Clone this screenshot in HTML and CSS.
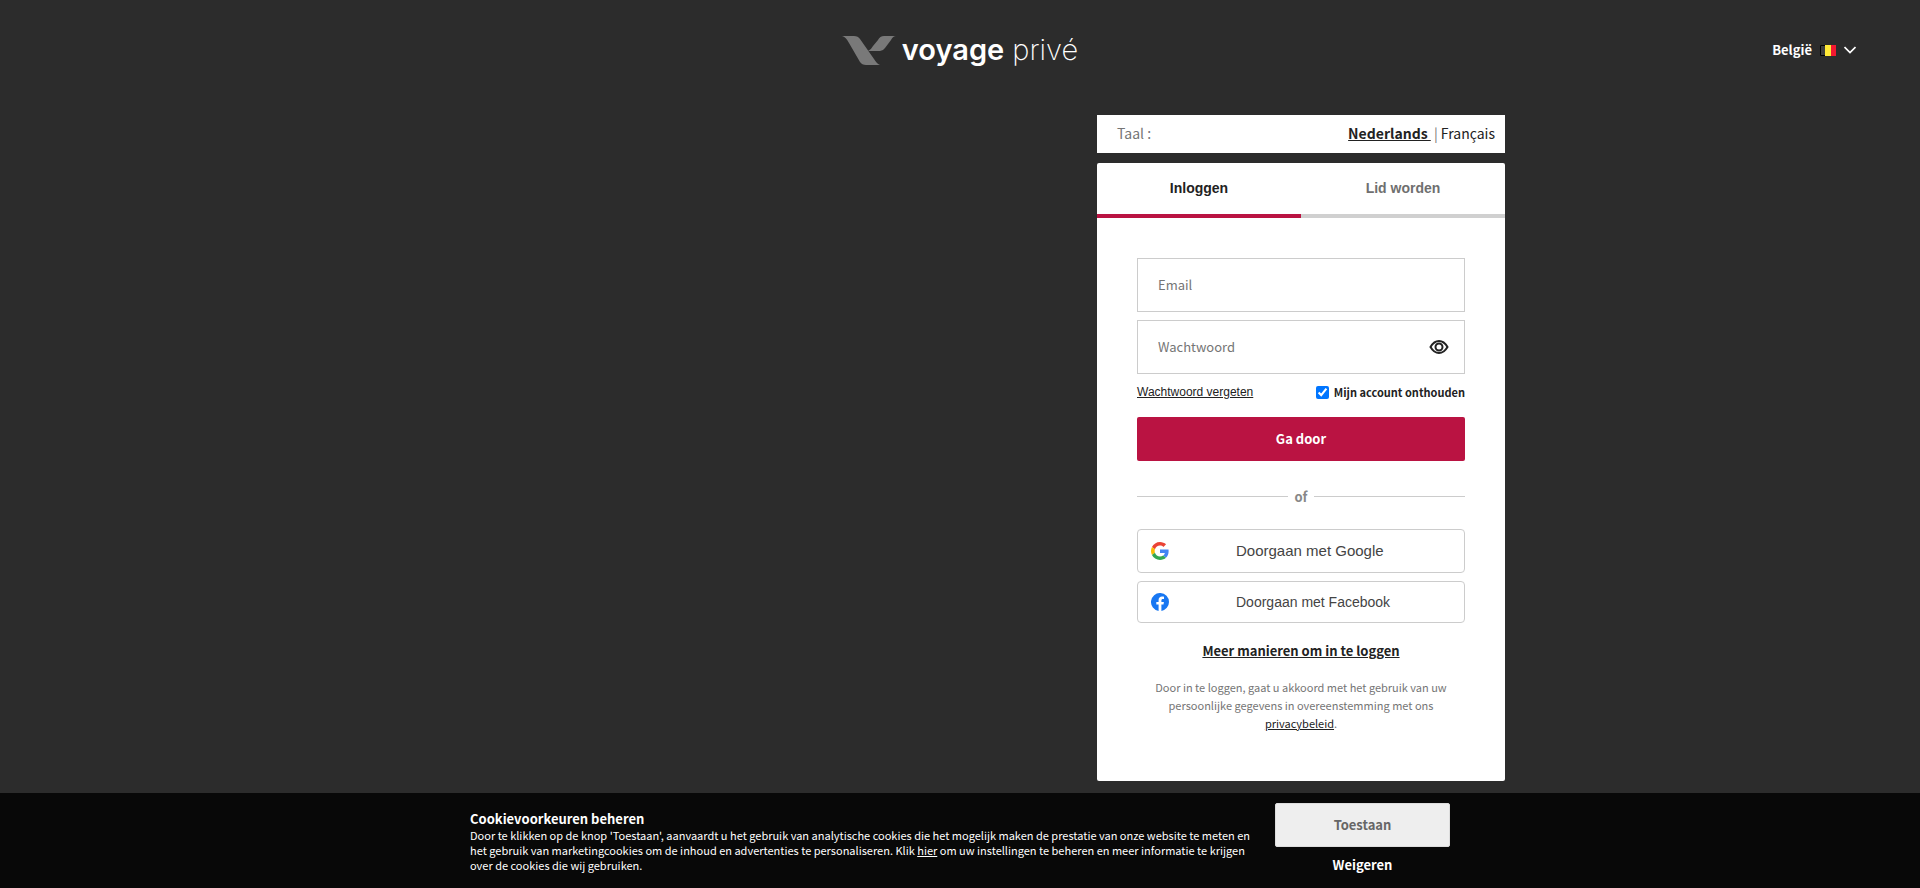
FILE: index.html
```html
<!DOCTYPE html>
<html lang="nl-BE">
	<head>
		<meta charset="utf-8">
		<meta name="viewport" content="width=device-width, initial-scale=1">
		<title>Voyage Privé</title>
		<link rel="stylesheet" href="styles.css">
	</head>
	<body>
		<header class="header">
			<a class="logo" href="#">
				<svg class="logo-mark" viewBox="0 0 54 29" aria-hidden="true">
					<path fill="#797979" d="M0 0h12q4 0 6 3l14 20q3 5 6 6H24q-4 0-6-3L7 7Q4 1 0 0z"/>
					<path fill="#797979" d="M54 0H42q-4 0-6 4l-5 6q-2 4-5 5h12q3 0 5-3l6-8q2-4 5-4z"/>
				</svg>
				<span class="logo-text"><b>voyage</b> <span>privé</span></span>
			</a>
			<button class="country" type="button">
				België
				<svg class="flag" viewBox="0 0 16 11" aria-hidden="true">
					<path fill="#3c3c3c" d="M0 0h5v11h-5z"/>
					<path fill="#ffe936" d="M5 0h6v11h-6z"/>
					<path fill="#f31830" d="M11 0h5v11h-5z"/>
					<path fill="none" stroke="#000" d="M5 .5h-4.500v10h4.500"/>
				</svg>
				<svg class="chevron" viewBox="0 0 12 8" aria-hidden="true">
					<path fill="none" stroke="#fff" stroke-width="1.700" d="M.5 1l5.500 5.500 5.500-5.500"/>
				</svg>
			</button>
		</header>

		<main class="main">
			<div class="panel">
				<nav class="lang">
					<span class="lang-label">Taal :</span>
					<span class="lang-list"><a class="lang-active" href="#">Nederlands&nbsp;</a> | <a href="#">Français</a></span>
				</nav>

				<section class="card">
					<div class="tabs" role="tablist">
						<button class="tab tab-active" type="button" role="tab" aria-selected="true">Inloggen</button>
						<button class="tab" type="button" role="tab" aria-selected="false">Lid worden</button>
					</div>

					<form class="form">
						<input class="field" type="email" placeholder="Email" aria-label="Email">
						<div class="password">
							<input class="field" type="password" placeholder="Wachtwoord" aria-label="Wachtwoord">
							<button class="eye" type="button" aria-label="Wachtwoord tonen">
								<svg viewBox="0 0 20 14" aria-hidden="true">
									<path d="M1.500 7q3.500-6 8.500-6t8.500 6q-3.500 6-8.500 6t-8.500-6z"/>
									<circle cx="10" cy="7" r="3.500"/>
								</svg>
							</button>
						</div>

						<div class="options">
							<a class="forgot" href="#">Wachtwoord vergeten</a>
							<span class="remember">
								<input type="checkbox" id="remember" checked>
								<label for="remember">Mijn account onthouden</label>
							</span>
						</div>

						<button class="submit" type="submit">Ga door</button>
						<div class="divider">of</div>

						<button class="social google" type="button">
							<svg viewBox="0 0 48 48" aria-hidden="true">
								<path fill="#ea4335" d="M24 9.500c3.540 0 6.710 1.220 9.210 3.600l6.850-6.850C35.900 2.380 30.470 0 24 0 14.620 0 6.510 5.380 2.560 13.220l7.980 6.190C12.430 13.720 17.740 9.500 24 9.500z"/>
								<path fill="#4285f4" d="M46.980 24.550c0-1.570-.15-3.090-.38-4.550H24v9.020h12.940c-.58 2.960-2.260 5.480-4.780 7.180l7.730 6c4.510-4.180 7.090-10.360 7.090-17.650z"/>
								<path fill="#fbbc05" d="M10.530 28.590c-.48-1.450-.76-2.990-.76-4.590s.27-3.140.76-4.590l-7.980-6.190C.92 16.460 0 20.120 0 24c0 3.880.92 7.540 2.560 10.780l7.970-6.190z"/>
								<path fill="#34a853" d="M24 48c6.480 0 11.930-2.130 15.890-5.810l-7.730-6c-2.150 1.450-4.920 2.300-8.160 2.300-6.260 0-11.570-4.220-13.470-9.910l-7.980 6.190C6.510 42.620 14.620 48 24 48z"/>
							</svg>
							Doorgaan met Google
						</button>
						<button class="social facebook" type="button">
							<svg viewBox="0 0 24 24" aria-hidden="true">
								<path fill="#1877f2" d="M24 12a12 12 0 1 0-13.880 11.850v-8.380H7.080V12h3.040V9.360c0-3 1.800-4.670 4.540-4.670 1.320 0 2.690.24 2.690.24v2.950h-1.520c-1.490 0-1.950.93-1.950 1.870V12h3.320l-.53 3.470h-2.790v8.380A12 12 0 0 0 24 12z"/>
							</svg>
							Doorgaan met Facebook
						</button>

						<a class="more" href="#">Meer manieren om in te loggen</a>
						<p class="legal">Door in te loggen, gaat u akkoord met het gebruik van uw persoonlijke gegevens in overeenstemming met ons <a href="#">privacybeleid</a>.</p>
					</form>
				</section>
			</div>
		</main>

		<footer class="cookies">
			<div class="cookies-inner">
				<div class="cookies-text">
					<h2>Cookievoorkeuren beheren</h2>
					<p>Door te klikken op de knop 'Toestaan', aanvaardt u het gebruik van analytische cookies die het mogelijk maken de prestatie van onze website te meten en het gebruik van marketingcookies om de inhoud en advertenties te personaliseren. Klik <a href="#">hier</a> om uw instellingen te beheren en meer informatie te krijgen over de cookies die wij gebruiken.</p>
				</div>
				<div class="cookies-actions">
					<button class="allow" type="button">Toestaan</button>
					<button class="refuse" type="button">Weigeren</button>
				</div>
			</div>
		</footer>
	</body>
</html>
```
FILE: styles.css
```css
* {
	box-sizing: border-box;
}

body {
	display: flex;
	flex-direction: column;
	min-height: 100vh;
	margin: 0;
	background: #2c2c2c;
	color: #222;
	font-family: "Noto Sans CJK SC", sans-serif;
	font-size: 13px;
	line-height: 18px;
}

a {
	color: inherit;
}

button {
	padding: 0;
	border: 0;
	background: none;
	color: inherit;
	font: inherit;
	cursor: pointer;
}

svg {
	display: block;
}

/* header */

.header {
	display: grid;
	grid-template-columns: 1fr auto 1fr;
	align-items: center;
	height: 100px;
	padding: 0 64px;
	color: #fff;
}

.logo {
	display: flex;
	grid-column: 2;
	align-items: center;
	gap: 6px;
	text-decoration: none;
}

.logo-mark {
	width: 54px;
	height: 29px;
}

.logo-text {
	font-family: Inter, sans-serif;
	font-size: 29px;
	font-weight: 200;
	line-height: 36px;
}

.logo-text b {
	font-weight: 600;
}

.country {
	display: flex;
	align-items: center;
	justify-self: end;
	gap: 8px;
	font-weight: 700;
}

.flag {
	width: 16px;
	height: 11px;
}

.chevron {
	width: 12px;
	height: 8px;
}

/* login panel */

.main {
	display: flex;
	flex: 1;
	justify-content: flex-end;
	width: 100%;
	max-width: 1170px;
	margin: 0 auto;
	padding: 15px 40px 12px;
}

.panel {
	width: 408px;
}

.lang {
	display: flex;
	align-items: center;
	justify-content: space-between;
	height: 38px;
	margin-bottom: 10px;
	padding: 0 10px 2px 20px;
	background: #fff;
	font-size: 14px;
}

.lang-label,
.lang-list {
	color: #757575;
}

.lang a {
	color: #222;
	text-decoration: none;
}

.lang .lang-active {
	font-weight: 700;
	text-decoration: underline;
}

.card {
	overflow: hidden;
	border-radius: 2px;
	background: #fff;
}

.tabs {
	display: flex;
}

.tab {
	flex: 1;
	height: 55px;
	padding-bottom: 1px;
	border-bottom: 4px solid #d0d0d0;
	color: #6f6f6f;
	font-family: "Liberation Sans", Arial, sans-serif;
	font-size: 14px;
	font-weight: 700;
}

.tab-active {
	border-color: #ba1342;
	color: #222;
}

.form {
	display: flex;
	flex-direction: column;
	padding: 40px 40px 48px;
}

.field {
	width: 100%;
	height: 54px;
	padding: 0 20px 2px;
	border: 1px solid #ccc;
	border-radius: 0;
	background: #fff;
	font: inherit;
}

.field::placeholder {
	color: #757575;
}

.password {
	position: relative;
	margin-top: 8px;
}

.eye {
	position: absolute;
	top: 20px;
	right: 16px;
}

.eye svg {
	width: 20px;
	height: 14px;
	fill: none;
	stroke: #222;
	stroke-width: 2;
}

.options {
	display: flex;
	align-items: center;
	justify-content: space-between;
	margin: 9px 0 16px;
	font-size: 11px;
}

.forgot {
	font-family: "Liberation Sans", Arial, sans-serif;
	font-size: 12px;
}

.remember {
	display: flex;
	align-items: center;
	gap: 5px;
	font-weight: 700;
}

.remember input {
	width: 13px;
	height: 13px;
	margin: 0;
}

.submit {
	height: 44px;
	border-radius: 2px;
	background: #ba1342;
	color: #fff;
	font-weight: 700;
}

.divider {
	display: flex;
	align-items: center;
	gap: 7px;
	margin: 26px 0 23px;
	color: #888;
	font-weight: 700;
	line-height: 19px;
}

.divider::before,
.divider::after {
	flex: 1;
	height: 1px;
	background: #ccc;
	content: "";
}

.social {
	display: flex;
	align-items: center;
	gap: 67px;
	padding: 0 13px;
	border: 1px solid #ccc;
	border-radius: 4px;
	color: #444;
	font-family: "Liberation Sans", Arial, sans-serif;
}

.social svg {
	width: 18px;
	height: 18px;
}

.google {
	height: 44px;
	font-size: 15px;
}

.facebook {
	height: 42px;
	margin-top: 8px;
	font-size: 14px;
}

.more {
	align-self: center;
	margin: 19px 0 18px;
	font-weight: 700;
}

.legal {
	margin: 0 0 1px;
	padding: 0 16px;
	color: #757575;
	font-size: 11px;
	text-align: center;
}

.legal a {
	color: #222;
}

/* cookie bar */

.cookies {
	padding: 10px 20px 14px;
	background: #080808;
	color: #fff;
}

.cookies-inner {
	display: flex;
	justify-content: space-between;
	max-width: 980px;
	margin: 0 auto;
}

.cookies-text {
	max-width: 790px;
	padding-top: 7px;
	font-size: 11px;
	line-height: 15px;
}

.cookies h2 {
	margin: 0;
	font-size: 13px;
	line-height: 18px;
}

.cookies p {
	margin: 0;
}

.cookies-actions {
	display: flex;
	flex-direction: column;
	align-items: center;
	gap: 9px;
	width: 175px;
	font-weight: 700;
}

.allow {
	width: 100%;
	height: 44px;
	border: 1px solid #ddd;
	border-radius: 2px;
	background: #eee;
	color: #666;
}
```
